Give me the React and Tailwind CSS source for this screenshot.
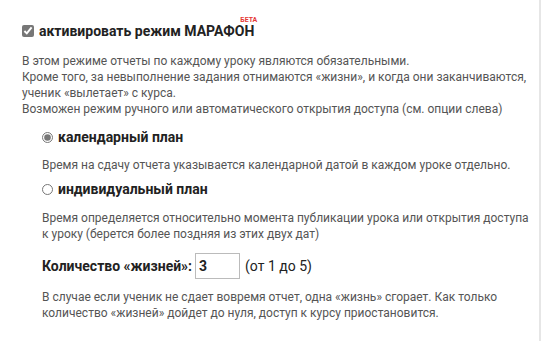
export default function App() {
  return (
    <div className="w-[542px] h-[341px] bg-white font-['Roboto',sans-serif] overflow-hidden">
      <div className="h-full mr-[1px] border-r-2 border-[#e6e6e6] pl-[22px] pr-[7px] pt-[21px]">
        {/* заголовок */}
        <label className="flex items-center gap-[5px]">
          <input type="checkbox" defaultChecked className="w-[12px] h-[12px] m-0 accent-[#777]" />
          <span className="relative text-[14px] font-bold text-[#222] leading-[20px]">
            активировать режим МАРАФОН
            <span className="absolute right-[-3px] top-[-4px] text-[7px] font-bold text-[#e53935] leading-none">БЕТА</span>
          </span>
        </label>

        <div className="mt-[12px] text-[12px] leading-[16px] text-[#555]">
          <p>В этом режиме отчеты по каждому уроку являются обязательными.</p>
          <p>Кроме того, за невыполнение задания отнимаются «жизни», и когда они заканчиваются, ученик «вылетает» с курса.</p>
          <p>Возможен режим ручного или автоматического открытия доступа (см. опции слева)</p>
        </div>

        <div className="pl-[20px]">
          <label className="flex items-center gap-[5px] mt-[10px]">
            <input type="radio" name="plan" defaultChecked className="w-[11px] h-[11px] m-0 accent-[#777]" />
            <span className="text-[14px] font-bold text-[#222] leading-[20px]">календарный план</span>
          </label>
          <p className="mt-[10px] text-[12px] leading-[16px] text-[#555]">
            Время на сдачу отчета указывается календарной датой в каждом уроке отдельно.
          </p>

          <label className="flex items-center gap-[5px] mt-[6px]">
            <input type="radio" name="plan" className="w-[11px] h-[11px] m-0 accent-[#777]" />
            <span className="text-[14px] font-bold text-[#222] leading-[20px]">индивидуальный план</span>
          </label>
          <p className="mt-[11px] text-[12px] leading-[16px] text-[#555]">
            Время определяется относительно момента публикации урока или открытия доступа к уроку (берется более поздняя из этих двух дат)
          </p>

          <div className="flex items-center mt-[11px] text-[14px] text-[#222]">
            <span className="font-bold">Количество «жизней»:</span>
            <input
              defaultValue="3"
              className="ml-[3px] w-[45px] h-[26px] border border-[#bbb] px-[3px] font-bold text-[14px] text-[#222] outline-none"
            />
            <span className="ml-[5px]">(от 1 до 5)</span>
          </div>

          <p className="mt-[10px] text-[12px] leading-[16px] text-[#555]">
            В случае если ученик не сдает вовремя отчет, одна «жизнь» сгорает. Как только количество «жизней» дойдет до нуля, доступ к курсу приостановится.
          </p>
        </div>
      </div>
    </div>
  )
}
